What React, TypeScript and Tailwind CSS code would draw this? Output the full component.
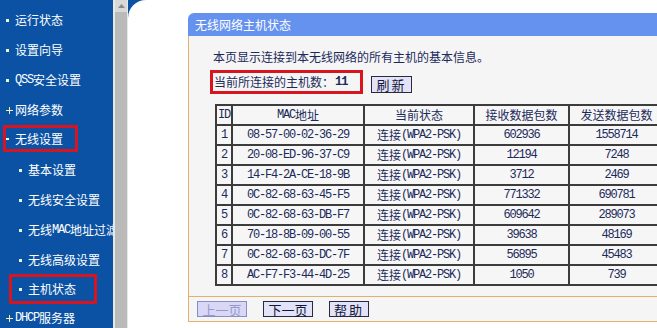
import React from "react";

const CJK = '"Noto Sans CJK SC", "Noto Sans", sans-serif';
const MONO = '"Liberation Mono", monospace';

const rows: [number, string, number, number][] = [
  [1, "08-57-00-02-36-29", 602936, 1558714],
  [2, "20-08-ED-96-37-C9", 12194, 7248],
  [3, "14-F4-2A-CE-18-9B", 3712, 2469],
  [4, "0C-82-68-63-45-F5", 771332, 690781],
  [5, "0C-82-68-63-DB-F7", 609642, 289073],
  [6, "70-18-8B-09-00-55", 39638, 48169],
  [7, "0C-82-68-63-DC-7F", 56895, 45483],
  [8, "AC-F7-F3-44-4D-25", 1050, 739],
];

function M({ children }: { children: React.ReactNode }) {
  return <span className="font-['Liberation_Mono',monospace] text-[12px] tracking-[-1.2px]">{children}</span>;
}

function Dot() {
  return <span className="inline-block w-[3px] h-[3px] bg-[#e8f6dc] mr-[6px] shrink-0" />;
}
function Plus() {
  return (
    <span className="relative inline-block w-[7px] h-[7px] mr-[2px] shrink-0">
      <span className="absolute left-0 top-[3px] w-[7px] h-[1px] bg-[#f4f0b0]" />
      <span className="absolute left-[3px] top-0 w-[1px] h-[7px] bg-[#f4f0b0]" />
    </span>
  );
}
function Dash() {
  return <span className="inline-block w-[3px] h-[2px] bg-white mr-[6px] shrink-0" />;
}

function Cell({ children, className = "" }: { children: React.ReactNode; className?: string }) {
  return (
    <div className={"h-[20px] border-r-2 border-b-2 border-[#3c3c3c] flex items-center justify-center whitespace-nowrap " + className}>
      {children}
    </div>
  );
}

export default function App() {
  return (
    <div className="w-[657px] h-[328px] overflow-hidden flex bg-white text-[12px]" style={{ fontFamily: CJK }}>
      {/* sidebar */}
      <aside className="w-[113px] h-full shrink-0 bg-[#0b52a4] text-white pt-[5px] overflow-hidden whitespace-nowrap leading-[14px]">
        <div className="h-[30px] flex items-center pl-[6px]"><Dot />运行状态</div>
        <div className="h-[30px] flex items-center pl-[6px]"><Dot />设置向导</div>
        <div className="h-[30px] flex items-center pl-[6px]"><Dot /><M>QSS</M>安全设置</div>
        <div className="h-[30px] flex items-center pl-[6px]"><Plus />网络参数</div>
        <div className="h-[30px] flex items-center pl-[3px]">
          <div className="w-[75px] h-[27px] border-[3px] border-[#d8141e] flex items-center pl-[0px] mt-[-3px]">
            <Dash />无线设置
          </div>
        </div>
        <div className="h-[30px] flex items-center pl-[19px]"><Dot />基本设置</div>
        <div className="h-[30px] flex items-center pl-[19px]"><Dot />无线安全设置</div>
        <div className="h-[30px] flex items-center pl-[19px]"><Dot />无线<M>MAC</M>地址过滤</div>
        <div className="h-[30px] flex items-center pl-[19px]"><Dot />无线高级设置</div>
        <div className="h-[30px] flex items-center pl-[9px]">
          <div className="w-[88px] h-[30px] border-[3px] border-[#d8141e] flex items-center pl-[7px] mt-[-2px]">
            <Dot />主机状态
          </div>
        </div>
        <div className="h-[30px] flex items-center pl-[6px] mt-[-2px]"><Plus /><M>DHCP</M>服务器</div>
      </aside>

      {/* scrollbar */}
      <div className="w-[15px] h-full shrink-0 bg-[#e8e8e8] pl-[2px] pr-[1px] flex flex-col">
        <div className="h-[12px] bg-[#d8d8d8] flex items-center justify-center">
          <svg width="7" height="4" viewBox="0 0 7 4"><path d="M0 4 L3.5 0 L7 4 Z" fill="#8a8a8a" /></svg>
        </div>
        <div className="flex-1 bg-[#bababa]" />
      </div>

      {/* main */}
      <main className="flex-1 h-full bg-[#0b52a4] relative">
        <div className="h-full bg-white rounded-tl-[18px] pl-[60px] pt-[13px] overflow-hidden">
          <div className="w-[620px] flex flex-col text-[#1c2a5a]">
            <div className="h-[23px] bg-[#6592ee] rounded-t-[6px] text-white pl-[7px] flex items-center">无线网络主机状态</div>
            <div className="bg-[#f5f5f5] border-l border-b border-[#e2b06c]">
              <p className="ml-[24px] mt-[14px] h-[14px] leading-[14px]">本页显示连接到本无线网络的所有主机的基本信息。</p>
              <div className="mt-[6px] ml-[21px] flex items-start">
                <div className="w-[153px] h-[24px] border-[3px] border-[#d8141e] flex items-center pl-[1px] whitespace-nowrap">
                  当前所连接的主机数：<span className="font-bold font-['Liberation_Mono',monospace] text-[12px] tracking-[-1px] ml-[1px]">11</span>
                </div>
                <button className="ml-[8px] mt-[6px] w-[41px] h-[17px] bg-[#e2e2f8] border border-[#2a2a3c] text-[13px] leading-[13px] tracking-[2px] text-[#141838] flex items-center justify-center">
                  刷新
                </button>
              </div>
              <div className="mt-[10px] ml-[26px] grid grid-cols-[16px_132px_110px_95px_95px] border-l-2 border-t-2 border-[#3c3c3c] w-max bg-[#f6f6f6]">
                <Cell><M>ID</M></Cell>
                <Cell><M>MAC</M>地址</Cell>
                <Cell>当前状态</Cell>
                <Cell>接收数据包数</Cell>
                <Cell>发送数据包数</Cell>
                {rows.map((r) => (
                  <React.Fragment key={r[0]}>
                    <Cell><M>{r[0]}</M></Cell>
                    <Cell><M>{r[1]}</M></Cell>
                    <Cell className="justify-start pl-[12px]">连接<M>(WPA2-PSK)</M></Cell>
                    <Cell><M>{r[2]}</M></Cell>
                    <Cell><M>{r[3]}</M></Cell>
                  </React.Fragment>
                ))}
              </div>
              <div className="mt-[10px] border-t border-[#e2b06c] h-[25px] pl-[8px] pt-[4px] flex items-start gap-[16px] text-[13px]">
                <button className="w-[50px] h-[16px] bg-[#d8d8f6] border border-[#8c8cc4] text-[#9898cc] leading-[13px] flex items-center justify-center">上一页</button>
                <button className="w-[50px] h-[16px] bg-[#e2e2f8] border border-[#2a2a3c] text-[#141838] leading-[13px] flex items-center justify-center">下一页</button>
                <button className="w-[40px] h-[16px] bg-[#e2e2f8] border border-[#2a2a3c] text-[#141838] leading-[13px] tracking-[2px] flex items-center justify-center">帮助</button>
              </div>
            </div>
          </div>
        </div>
        <div className="absolute left-[409px] top-[-6px] text-[21px] text-white/85 whitespace-nowrap font-['Liberation_Sans',sans-serif] leading-[24px]">
          www.it528.com
        </div>
      </main>
    </div>
  );
}
